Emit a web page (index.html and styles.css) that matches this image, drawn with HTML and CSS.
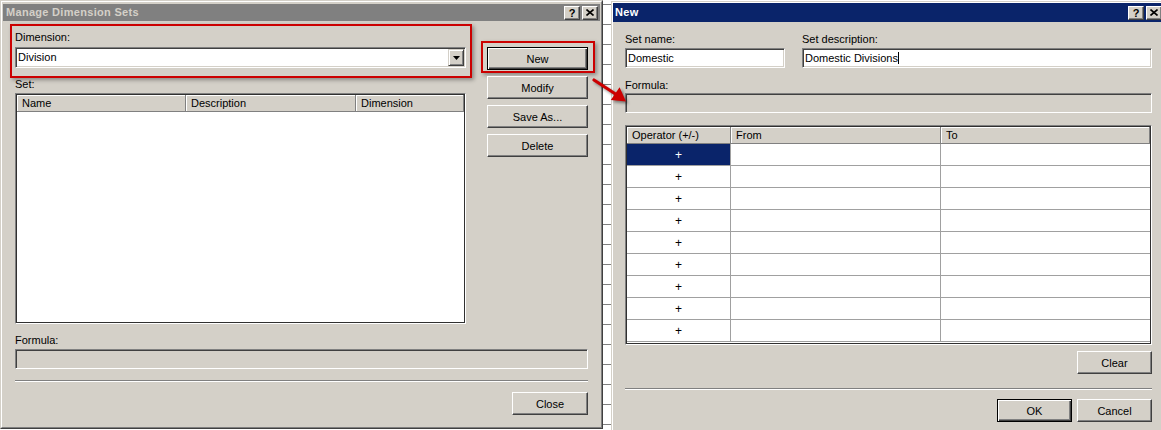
FILE: index.html
```html
<!DOCTYPE html>
<html>
<head>
<meta charset="utf-8">
<title>Manage Dimension Sets</title>
<link rel="stylesheet" href="styles.css">
</head>
<body>
<div class="screen">
  <div class="dlg dlg-left">
    <div class="dlg-in">
      <div class="titlebar inactive">
        <span class="title">Manage Dimension Sets</span>
        <div class="tbtns">
          <span class="tbtn">?</span>
          <span class="tbtn"><svg width="8" height="7" viewBox="0 0 8 7"><path d="M0.5 0.5 L7.5 6.5 M7.5 0.5 L0.5 6.5" stroke="#000" stroke-width="1.6"/></svg></span>
        </div>
      </div>
      <div class="body-left">
        <div class="top-row">
          <div class="left-col">
            <div class="redbox dimbox">
              <div class="lbl">Dimension:</div>
              <div class="combo">
                <span class="ctext">Division</span>
                <span class="dropbtn"><svg width="7" height="4" viewBox="0 0 7 4"><path d="M0 0 H7 L3.5 4 Z" fill="#000"/></svg></span>
              </div>
            </div>
            <div class="lbl">Set:</div>
            <div class="listbox">
              <div class="listin">
                <div class="lhead">
                  <span class="hcell">Name</span>
                  <span class="hcell">Description</span>
                  <span class="hcell">Dimension</span>
                </div>
              </div>
            </div>
          </div>
          <div class="btn-col">
            <div class="redbox newbox"><div class="btn default">New</div></div>
            <div class="btn first">Modify</div>
            <div class="btn">Save As...</div>
            <div class="btn">Delete</div>
          </div>
        </div>
        <div class="lbl formula-lbl">Formula:</div>
        <div class="field disabled formula-l"></div>
        <div class="sep sep-l"></div>
        <div class="footer footer-l"><div class="btn close">Close</div></div>
      </div>
    </div>
  </div>

  <div class="sheet"></div>

  <div class="dlg dlg-right">
    <div class="dlg-in">
      <div class="titlebar active">
        <span class="title">New</span>
        <div class="tbtns">
          <span class="tbtn">?</span>
          <span class="tbtn"><svg width="8" height="7" viewBox="0 0 8 7"><path d="M0.5 0.5 L7.5 6.5 M7.5 0.5 L0.5 6.5" stroke="#000" stroke-width="1.6"/></svg></span>
        </div>
      </div>
      <div class="body-right">
        <div class="names">
          <div>
            <div class="lbl">Set name:</div>
            <div class="field input">Domestic</div>
          </div>
          <div>
            <div class="lbl">Set description:</div>
            <div class="field input"><span class="caret">Domestic Divisions</span></div>
          </div>
        </div>
        <div class="lbl formula-r-lbl">Formula:</div>
        <div class="field disabled formula-r"></div>
        <div class="grid">
          <div class="grid-in">
            <div class="ghead">
              <span class="hcell">Operator (+/-)</span>
              <span class="hcell">From</span>
              <span class="hcell">To</span>
            </div>
            <div class="grow"><span class="gc op sel">+</span><span class="gc"></span><span class="gc last"></span></div>
            <div class="grow"><span class="gc op">+</span><span class="gc"></span><span class="gc last"></span></div>
            <div class="grow"><span class="gc op">+</span><span class="gc"></span><span class="gc last"></span></div>
            <div class="grow"><span class="gc op">+</span><span class="gc"></span><span class="gc last"></span></div>
            <div class="grow"><span class="gc op">+</span><span class="gc"></span><span class="gc last"></span></div>
            <div class="grow"><span class="gc op">+</span><span class="gc"></span><span class="gc last"></span></div>
            <div class="grow"><span class="gc op">+</span><span class="gc"></span><span class="gc last"></span></div>
            <div class="grow"><span class="gc op">+</span><span class="gc"></span><span class="gc last"></span></div>
            <div class="grow"><span class="gc op">+</span><span class="gc"></span><span class="gc last"></span></div>
          </div>
        </div>
        <div class="footer clear-row"><div class="btn wide75">Clear</div></div>
        <div class="sep sep-r"></div>
        <div class="footer ok-row">
          <div class="btn default wide75">OK</div>
          <div class="btn wide75">Cancel</div>
        </div>
      </div>
    </div>
  </div>

  <svg class="arrow" width="48" height="40" viewBox="0 0 48 40">
    <path d="M9 8 L30.5 22" stroke="#cc0000" stroke-width="3.2" stroke-linecap="round"/>
    <path d="M41 29.5 L25.8 28 L34.6 15.2 Z" fill="#cc0000"/>
  </svg>
</div>
</body>
</html>
```

FILE: styles.css
```css
* { box-sizing: border-box; }
html, body { margin: 0; padding: 0; }
body {
  width: 1161px;
  height: 430px;
  overflow: hidden;
  background: #fff;
  font-family: Tahoma, "Liberation Sans", Arial, sans-serif;
  font-size: 11px;
  color: #000;
}
.screen {
  position: relative;
  display: flex;
  align-items: flex-start;
  width: 1161px;
  height: 430px;
  overflow: hidden;
  background: #fff;
}

/* dialog frames */
.dlg {
  flex: none;
  border: 1px solid;
  border-color: #d4d0c8 #404040 #404040 #d4d0c8;
  background: #d4d0c8;
}
.dlg-in {
  height: 100%;
  border: 1px solid;
  border-color: #fff #808080 #808080 #fff;
}
.dlg-left { width: 603px; height: 429px; }
.dlg-left .dlg-in { padding: 2px 1px 1px 1px; }
.dlg-right { width: 556px; height: 450px; margin-top: 1px; }
.dlg-right .dlg-in { padding: 0; }

.titlebar {
  display: flex;
  align-items: center;
  justify-content: space-between;
}
.titlebar.inactive { height: 17px; background: #808080; color: #d4d0c8; padding-left: 3px; }
.titlebar.inactive .tbtns { margin-right: 2px; }
.titlebar.active { height: 19px; background: #0a246a; color: #fff; padding-left: 2px; }
.titlebar.active .tbtns { margin-right: 3px; }
.title { font-weight: bold; font-size: 11px; line-height: 13px; white-space: nowrap; letter-spacing: 0.3px; }
.tbtns { display: flex; gap: 2px; }
.tbtn {
  width: 16px;
  height: 14px;
  display: flex;
  align-items: center;
  justify-content: center;
  background: #d4d0c8;
  border: 1px solid;
  border-color: #fff #404040 #404040 #fff;
  box-shadow: inset -1px -1px #808080;
  color: #000;
  font-weight: bold;
  font-size: 11px;
  line-height: 12px;
}

/* common controls */
.lbl { height: 13px; line-height: 13px; white-space: nowrap; }
.field {
  height: 20px;
  border: 1px solid;
  border-color: #808080 #fff #fff #808080;
  box-shadow: inset 1px 1px #404040, inset -1px -1px #d4d0c8;
  background: #fff;
}
.field.disabled { background: #d4d0c8; }
.field.input { padding: 1px 0 0 2px; line-height: 16px; white-space: nowrap; }
.caret { border-right: 1px solid #000; padding-right: 0; }
.btn {
  height: 23px;
  display: flex;
  align-items: center;
  justify-content: center;
  background: #d4d0c8;
  border: 1px solid;
  border-color: #fff #404040 #404040 #fff;
  box-shadow: inset -1px -1px #808080;
  white-space: nowrap;
}
.btn.default {
  border: 1px solid #000;
  box-shadow: inset 1px 1px #fff, inset -1px -1px #404040, inset -2px -2px #808080;
}
.sep { height: 2px; border-top: 1px solid #808080; border-bottom: 1px solid #fff; }
.footer { display: flex; justify-content: flex-end; gap: 5px; }
.redbox {
  border: 2px solid #cc0000;
  box-shadow: 2px 2px 4px rgba(0, 0, 0, 0.35);
}

/* left dialog body */
.body-left { padding: 0 12px; }
.top-row {
  display: grid;
  grid-template-columns: 457px 114px;
  column-gap: 9px;
}
.dimbox {
  width: 462px;
  margin: 3px 0 0 -5px;
  padding: 5px 4px 8px 3px;
}
.combo {
  position: relative;
  margin-top: 3px;
  width: 451px;
  height: 21px;
  border: 1px solid;
  border-color: #808080 #fff #fff #808080;
  box-shadow: inset 1px 1px #404040, inset -1px -1px #d4d0c8;
  background: #fff;
  display: flex;
  align-items: center;
  padding-left: 2px;
}
.ctext { line-height: 13px; }
.dropbtn {
  position: absolute;
  right: 1px;
  top: 1px;
  width: 16px;
  height: 17px;
  display: flex;
  align-items: center;
  justify-content: center;
  background: #d4d0c8;
  border: 1px solid;
  border-color: #d4d0c8 #404040 #404040 #d4d0c8;
  box-shadow: inset 1px 1px #fff, inset -1px -1px #808080;
}
.listbox {
  margin-top: 2px;
  width: 451px;
  height: 231px;
  border: 1px solid;
  border-color: #808080 #fff #fff #808080;
  background: #fff;
}
.listin { height: 100%; border: 1px solid #303030; }
.lhead {
  display: grid;
  grid-template-columns: 169px 170px 1fr;
  height: 17px;
}
.hcell {
  background: #d4d0c8;
  border-right: 1px solid #808080;
  border-bottom: 1px solid #808080;
  box-shadow: inset 1px 1px #fff;
  padding-left: 5px;
  line-height: 17px;
  white-space: nowrap;
  overflow: hidden;
}
.btn-col .newbox {
  margin-top: 20px;
  padding: 4px 5px 1px 4px;
}
.btn-col .btn { width: 101px; }
.btn-col > .btn { margin: 6px 0 0 6px; }
.btn-col > .btn.first { margin-top: 3px; }
.formula-lbl { margin-top: 10px; }
.formula-l { margin-top: 2px; }
.sep-l { margin-top: 11px; }
.footer-l { margin-top: 10px; }
.close { width: 76px; }

/* spreadsheet strip between dialogs */
.sheet {
  flex: none;
  width: 8px;
  height: 430px;
  background: repeating-linear-gradient(to bottom, transparent 0, transparent 4px, #808080 4px, #808080 5px, transparent 5px, transparent 20px) #fff;
}

/* right dialog body */
.body-right { padding: 0 13px 0 12px; }
.names {
  display: grid;
  grid-template-columns: 160px 350px;
  column-gap: 17px;
  margin-top: 11px;
}
.names .field { margin-top: 2px; }
.formula-r-lbl { margin-top: 11px; }
.formula-r { margin-top: 1px; }
.grid {
  margin-top: 12px;
  height: 220px;
  border: 1px solid;
  border-color: #808080 #fff #fff #808080;
  background: #fff;
}
.grid-in { height: 100%; border: 1px solid #303030; }
.ghead, .grow {
  display: grid;
  grid-template-columns: 104px 210px 1fr;
}
.ghead { height: 17px; }
.ghead .hcell { line-height: 17px; padding-left: 5px; }
.grow { height: 22px; }
.gc {
  border-right: 1px solid #a0a0a0;
  border-bottom: 1px solid #a0a0a0;
  display: flex;
  align-items: center;
  justify-content: center;
  font-size: 12px;
}
.gc.last { border-right: none; }
.gc.sel { background: #0a246a; color: #fff; }
.clear-row { margin-top: 6px; }
.wide75 { width: 75px; }
.sep-r { margin-top: 14px; }
.ok-row { margin-top: 9px; }

/* annotation arrow overlay */
.arrow {
  position: absolute;
  left: 585px;
  top: 72px;
  filter: drop-shadow(2px 2px 1.5px rgba(0, 0, 0, 0.45));
}
```
